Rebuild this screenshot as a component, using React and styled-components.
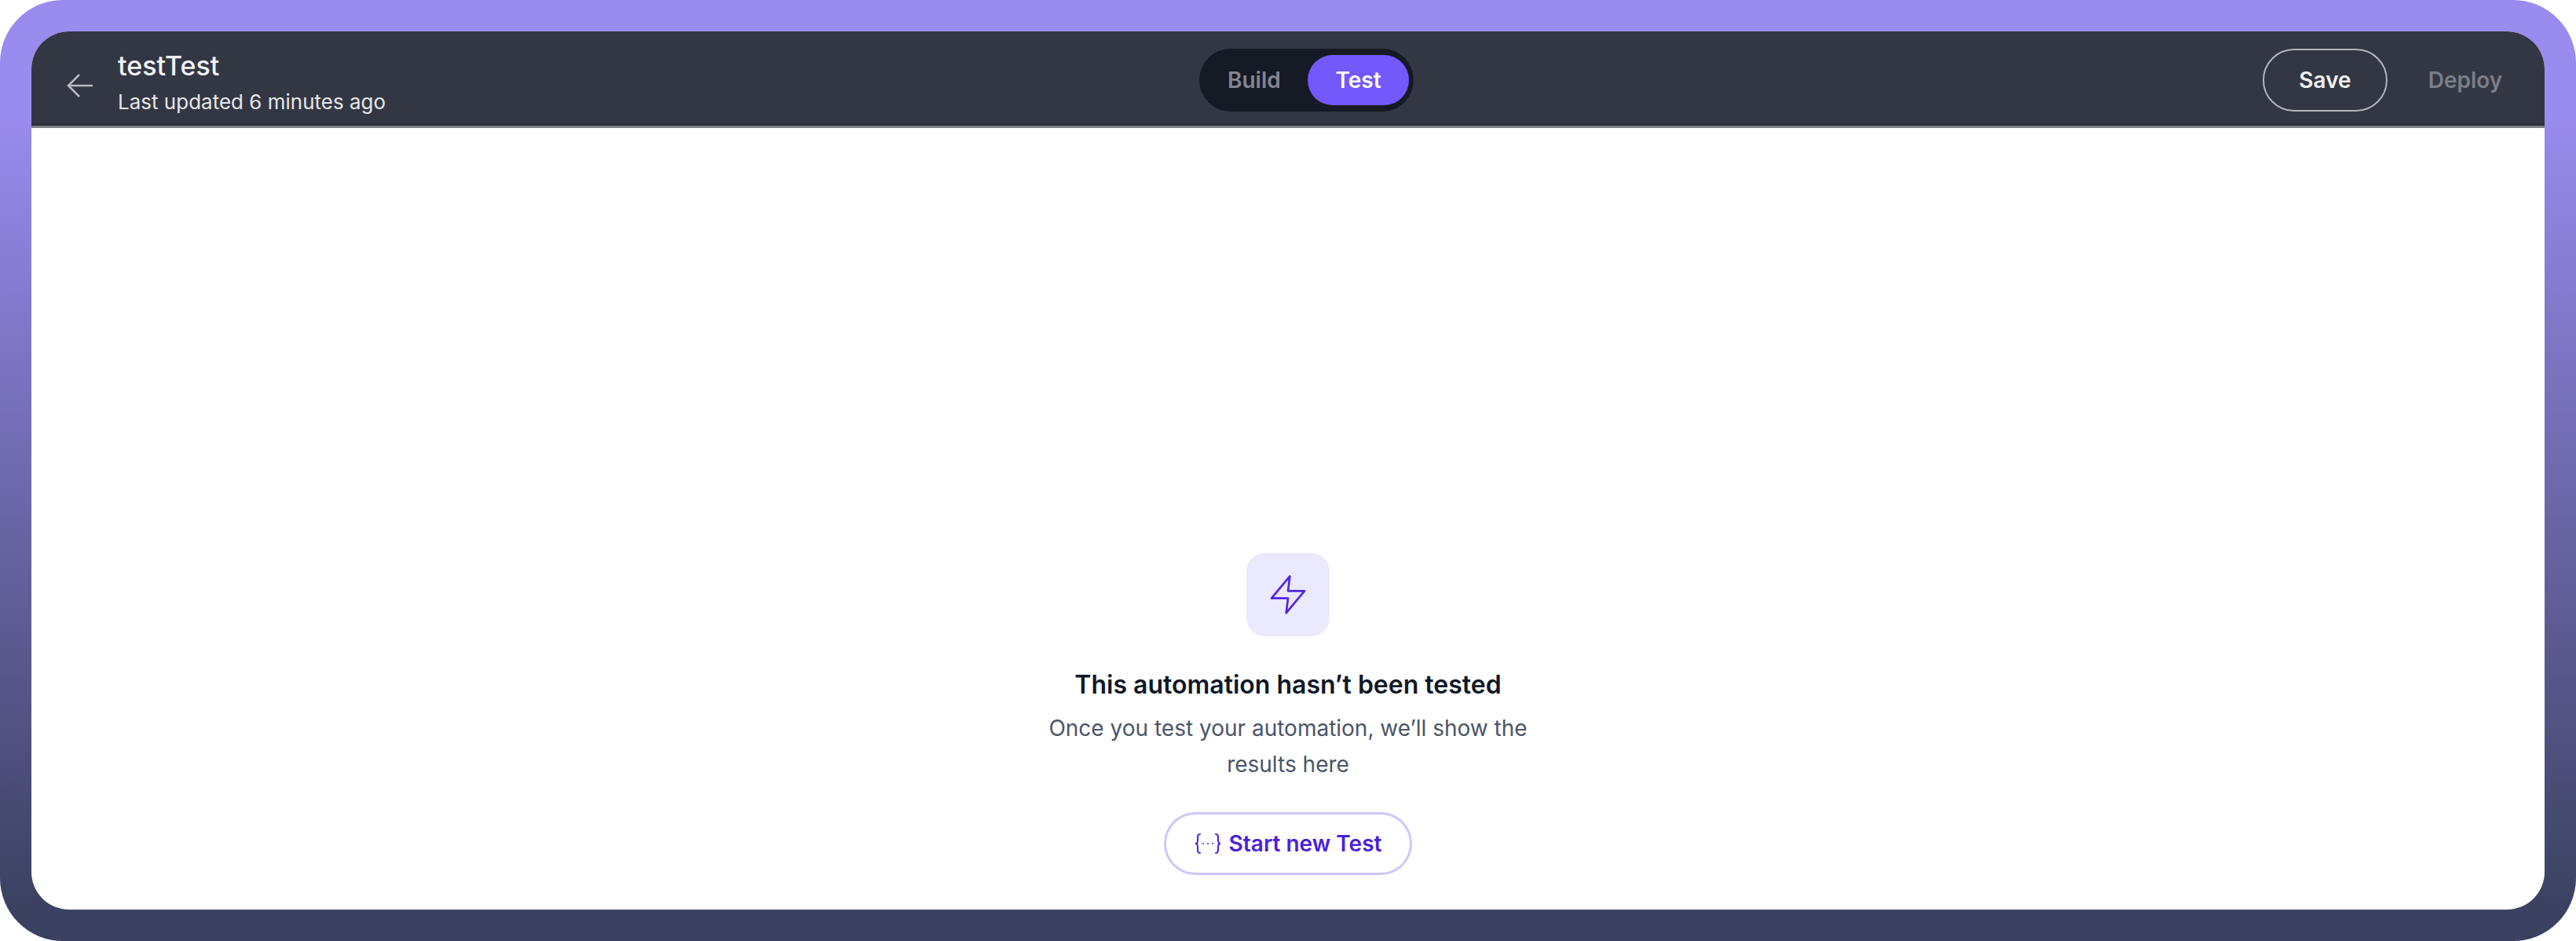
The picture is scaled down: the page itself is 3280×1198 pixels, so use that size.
import React from "react";
import styled, { createGlobalStyle } from "styled-components";

const GlobalStyle = createGlobalStyle`
  html, body {
    margin: 0;
    padding: 0;
    background: #fff;
  }
  * {
    box-sizing: border-box;
  }
`;

const Frame = styled.div`
  width: 3280px;
  height: 1198px;
  padding: 40px;
  border-radius: 80px;
  background: linear-gradient(180deg, #9a8bee 0%, #9a8bee 12%, #3b4261 96%);
  font-family: Inter, "Liberation Sans", sans-serif;
`;

const Panel = styled.div`
  height: 100%;
  display: flex;
  flex-direction: column;
  border-radius: 48px;
  overflow: hidden;
  background: #fff;
`;

const Header = styled.header`
  height: 123px;
  flex: none;
  display: flex;
  align-items: flex-start;
  padding: 22px 20px 0 44px;
  background: #333743;
  border-bottom: 3px solid #7d7f86;
  box-shadow: inset 0 -3px 0 #2a2e3a;
`;

const Left = styled.div`
  width: 1443px;
  display: flex;
  align-items: center;
  gap: 30px;
`;

const BackIcon = styled.svg`
  width: 36px;
  height: 36px;
  flex: none;
  margin-top: 8px;
  color: #b9bbc2;
`;

const Titles = styled.div`
  display: flex;
  flex-direction: column;
  gap: 6px;
`;

const Title = styled.div`
  font-size: 34px;
  line-height: 44px;
  font-weight: 500;
  color: #f1f1f4;
`;

const Updated = styled.div`
  font-size: 26px;
  line-height: 36px;
  font-weight: 400;
  color: #e6e7ea;
`;

const Toggle = styled.div`
  width: 273px;
  height: 80px;
  display: flex;
  align-items: center;
  justify-content: space-between;
  padding: 0 6px 0 36px;
  border-radius: 40px;
  background: #151a25;
`;

const ToggleItem = styled.div`
  height: 64px;
  display: flex;
  align-items: center;
  justify-content: center;
  font-size: 28px;
  font-weight: 600;
  width: ${(p) => (p.$active ? "129px" : "auto")};
  border-radius: 32px;
  background: ${(p) => (p.$active ? "#7358fb" : "transparent")};
  color: ${(p) => (p.$active ? "#fff" : "#83858f")};
`;

const Actions = styled.div`
  margin-left: auto;
  display: flex;
  align-items: center;
  gap: 18px;
`;

const Button = styled.button`
  height: 80px;
  font-family: inherit;
  font-size: 28px;
  font-weight: 600;
  border-radius: 40px;
  background: transparent;
  color: ${(p) => (p.$muted ? "#7b7e88" : "#f1f1f4")};
  border: ${(p) => (p.$muted ? "none" : "2.5px solid #b4b6bd")};
  padding: 0;
  width: ${(p) => (p.$muted ? "162px" : "159px")};
`;

const Content = styled.main`
  flex: 1;
  display: flex;
  flex-direction: column;
  align-items: center;
  justify-content: flex-end;
  padding-bottom: 44px;
`;

const IconTile = styled.div`
  width: 106px;
  height: 106px;
  display: flex;
  align-items: center;
  justify-content: center;
  border-radius: 24px;
  background: #ebe9fd;
  color: #5225e8;
`;

const Heading = styled.h2`
  margin: 38px 0 0;
  font-size: 32px;
  line-height: 48px;
  font-weight: 600;
  color: #101828;
`;

const Description = styled.p`
  margin: 8px 0 0;
  width: 640px;
  font-size: 28px;
  line-height: 46px;
  font-weight: 400;
  text-align: center;
  color: #4a5568;
`;

const StartButton = styled.button`
  margin-top: 38px;
  height: 80px;
  width: 316px;
  display: flex;
  align-items: center;
  justify-content: center;
  gap: 10px;
  font-family: inherit;
  font-size: 28px;
  font-weight: 600;
  color: #4c1fdc;
  background: #fff;
  border: 3px solid #cdc6fb;
  border-radius: 40px;
  padding: 0;
`;

const App = () => {
  return (
    <>
      <GlobalStyle />
      <Frame>
        <Panel>
          <Header>
            <Left>
              <BackIcon viewBox="0 0 36 36" fill="none" stroke="currentColor" strokeWidth="2.5">
                <path d="M34 18H3" />
                <path d="M17 4 3 18l14 14" />
              </BackIcon>
              <Titles>
                <Title>testTest</Title>
                <Updated>Last updated 6 minutes ago</Updated>
              </Titles>
            </Left>
            <Toggle>
              <ToggleItem>Build</ToggleItem>
              <ToggleItem $active>Test</ToggleItem>
            </Toggle>
            <Actions>
              <Button>Save</Button>
              <Button $muted>Deploy</Button>
            </Actions>
          </Header>
          <Content>
            <IconTile>
              <svg width="56" height="56" viewBox="0 0 24 24" fill="none" stroke="currentColor" strokeWidth="1.15" strokeLinejoin="round">
                <polygon points="13 2 3 14 12 14 11 22 21 10 12 10 13 2" />
              </svg>
            </IconTile>
            <Heading>This automation hasn’t been tested</Heading>
            <Description>Once you test your automation, we’ll show the results here</Description>
            <StartButton>
              <svg width="34" height="28" viewBox="0 0 34 28" fill="none" stroke="currentColor" strokeWidth="2" strokeLinecap="round">
                <path d="M7 2C4 2 4 4 4 7v3c0 2-1 4-3 4 2 0 3 2 3 4v3c0 3 0 5 3 5" />
                <path d="M27 2c3 0 3 2 3 5v3c0 2 1 4 3 4-2 0-3 2-3 4v3c0 3 0 5-3 5" />
                <path d="M11 14h.01M17 14h.01M23 14h.01" />
              </svg>
              Start new Test
            </StartButton>
          </Content>
        </Panel>
      </Frame>
    </>
  );
};

export default App;
